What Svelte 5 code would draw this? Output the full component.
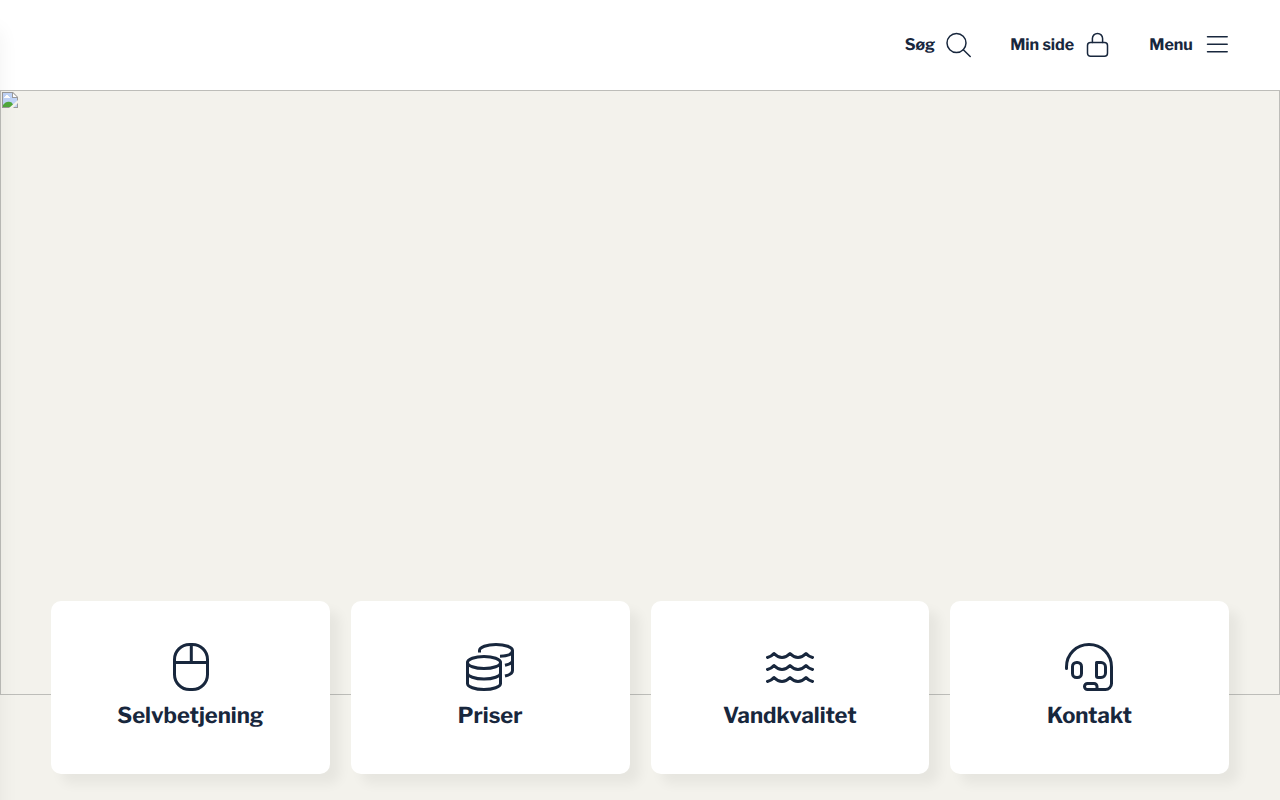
<script>
  const shortcuts = [
    { label: 'Selvbetjening', icon: 'mouse' },
    { label: 'Priser', icon: 'coins' },
    { label: 'Vandkvalitet', icon: 'waves' },
    { label: 'Kontakt', icon: 'headset' }
  ];
</script>

<div class="page">
  <header>
    <nav>
      <button type="button">
        Søg
        <svg width="26" height="26" viewBox="0 0 26 26" aria-hidden="true">
          <circle cx="11.5" cy="11" r="9.5" />
          <path d="M18.3 17.8 25.2 24.5" />
        </svg>
      </button>
      <a href="#min-side">
        Min side
        <svg width="26" height="26" viewBox="0 0 26 26" aria-hidden="true">
          <rect x="3.5" y="10.6" width="20" height="13.7" rx="3" />
          <path d="M8.4 10.6V6.5a5.1 5.1 0 0 1 10.2 0v4.1" />
        </svg>
      </a>
      <button type="button">
        Menu
        <svg width="26" height="26" viewBox="0 0 26 26" aria-hidden="true">
          <path d="M4.5 4.8h19.7M4.5 12.3h19.7M4.5 19.8h19.7" />
        </svg>
      </button>
    </nav>
  </header>

  <main>
    <div class="hero">
      <svg width="16" height="16" viewBox="0 0 16 16" aria-hidden="true">
        <path d="M0 0h11l5 5v11H0z" fill="#9a9a9a" />
        <path d="M1 1h9v5h5v9H1z" fill="#c0d4f7" />
        <path d="M11 1.2 14.8 5H11z" fill="#fff" />
        <path d="M2 6V5h1V4h1V3h2v1h1v1h1v1z" fill="#fff" />
        <path d="M1 15v-2c2-3 5-4 7-3 2 0 3 2 4 5z" fill="#50a83c" />
        <path d="M7 16 16 8v3l-5 5z" fill="#f3f2ec" />
      </svg>
    </div>

    <div class="cards">
      {#each shortcuts as item}
        <a class="card" href={'#' + item.label.toLowerCase()}>
          <svg width="48" height="48" viewBox="0 0 48 48" aria-hidden="true">
            {#if item.icon === 'mouse'}
              <rect x="7.5" y="1.5" width="33" height="45" rx="15" />
              <path d="M7.5 19.5h33M24.3 1.5v18" />
            {:else if item.icon === 'coins'}
              <ellipse cx="18" cy="19.5" rx="16.5" ry="6" />
              <path d="M1.5 19.5v21c0 3.3 7.4 6 16.5 6s16.5-2.7 16.5-6v-21" />
              <path d="M1.5 30c0 3.3 7.4 6 16.5 6s16.5-2.7 16.5-6" />
              <path stroke-linecap="butt" d="M13.5 9.5V7.5c0-3.3 7.4-6 16.500-6s16.500 2.700 16.500 6S42 13 34 13.200" />
              <path stroke-linecap="butt" d="M46.500 7.500v20c0 2.500-3 4.500-7.500 5.500M46.500 17.500c0 2-3 3.700-7.500 4.700" />
            {:else if item.icon === 'waves'}
              {#each [0, 12, 24] as y}
                <path transform={`translate(0 ${y})`} d="M1.500 14.500Q5.500 13.500 8 10.500Q16 18.500 24 10.500Q32 18.500 40 10.500Q42.500 13.500 46.500 14.500" />
              {/each}
            {:else}
              <path d="M1.500 25.500V24C1.500 11 11.500 1.500 24 1.500S46.500 11 46.500 24v16.500a6 6 0 0 1-6 6H22.500a3 3 0 0 1 0-6H29a3 3 0 0 1 3 3v3" />
              <rect x="7.500" y="19.500" width="9" height="15" rx="4" />
              <path d="M31.500 19.500H36a4.500 4.500 0 0 1 4.500 4.500v6a4.500 4.500 0 0 1-4.500 4.500h-3a1.500 1.500 0 0 1-1.500-1.500v-12a1.500 1.500 0 0 1 1.500-1.500z" />
            {/if}
          </svg>
          <span>{item.label}</span>
        </a>
      {/each}
    </div>
  </main>
</div>

<style>
  :global(body) {
    margin: 0;
    background: #f3f2ec;
  }

  .page {
    min-height: 100vh;
    color: #18273d;
    font-family: 'Libre Franklin', 'Open Sans', sans-serif;
    font-weight: 700;
    text-rendering: geometricPrecision;
  }

  /* Soft shadow of the closed side panel */
  .page::before {
    content: '';
    position: fixed;
    z-index: 2;
    top: 0;
    bottom: -60px;
    right: 100%;
    width: 20px;
    box-shadow: 0 30px 20px rgba(0, 0, 0, 0.06);
    pointer-events: none;
  }

  header {
    box-sizing: border-box;
    min-height: 90px;
    padding: 0 4%;
    display: flex;
    align-items: center;
    justify-content: flex-end;
    background: #fff;
  }

  nav {
    display: flex;
    gap: 39px;
  }

  nav button,
  nav a {
    display: flex;
    align-items: center;
    gap: 10px;
    padding: 0;
    border: 0;
    background: none;
    color: inherit;
    font: inherit;
    font-size: 16px;
    line-height: 24px;
    text-decoration: none;
    text-rendering: inherit;
    cursor: pointer;
  }

  nav svg {
    fill: none;
    stroke: currentColor;
    stroke-width: 1.5;
    stroke-linecap: round;
    stroke-linejoin: round;
  }

  .hero {
    box-sizing: border-box;
    width: 100%;
    aspect-ratio: 1280 / 605;
    padding: 1px;
    border: 1px solid #bdbdb9;
  }

  .hero svg {
    display: block;
  }

  .cards {
    position: relative;
    display: grid;
    grid-template-columns: repeat(4, 1fr);
    gap: 21px;
    margin-top: -94px;
    padding: 0 4% 26px;
  }

  .card {
    display: flex;
    flex-direction: column;
    align-items: center;
    gap: 9px;
    padding: 42px 16px;
    border-radius: 10px;
    background: #fff;
    box-shadow: 10px 10px 12px rgba(0, 0, 0, 0.05);
    color: inherit;
    font-size: 22px;
    line-height: 32px;
    text-decoration: none;
  }

  .card svg {
    fill: none;
    stroke: currentColor;
    stroke-width: 3;
    stroke-linecap: round;
    stroke-linejoin: round;
  }
</style>
